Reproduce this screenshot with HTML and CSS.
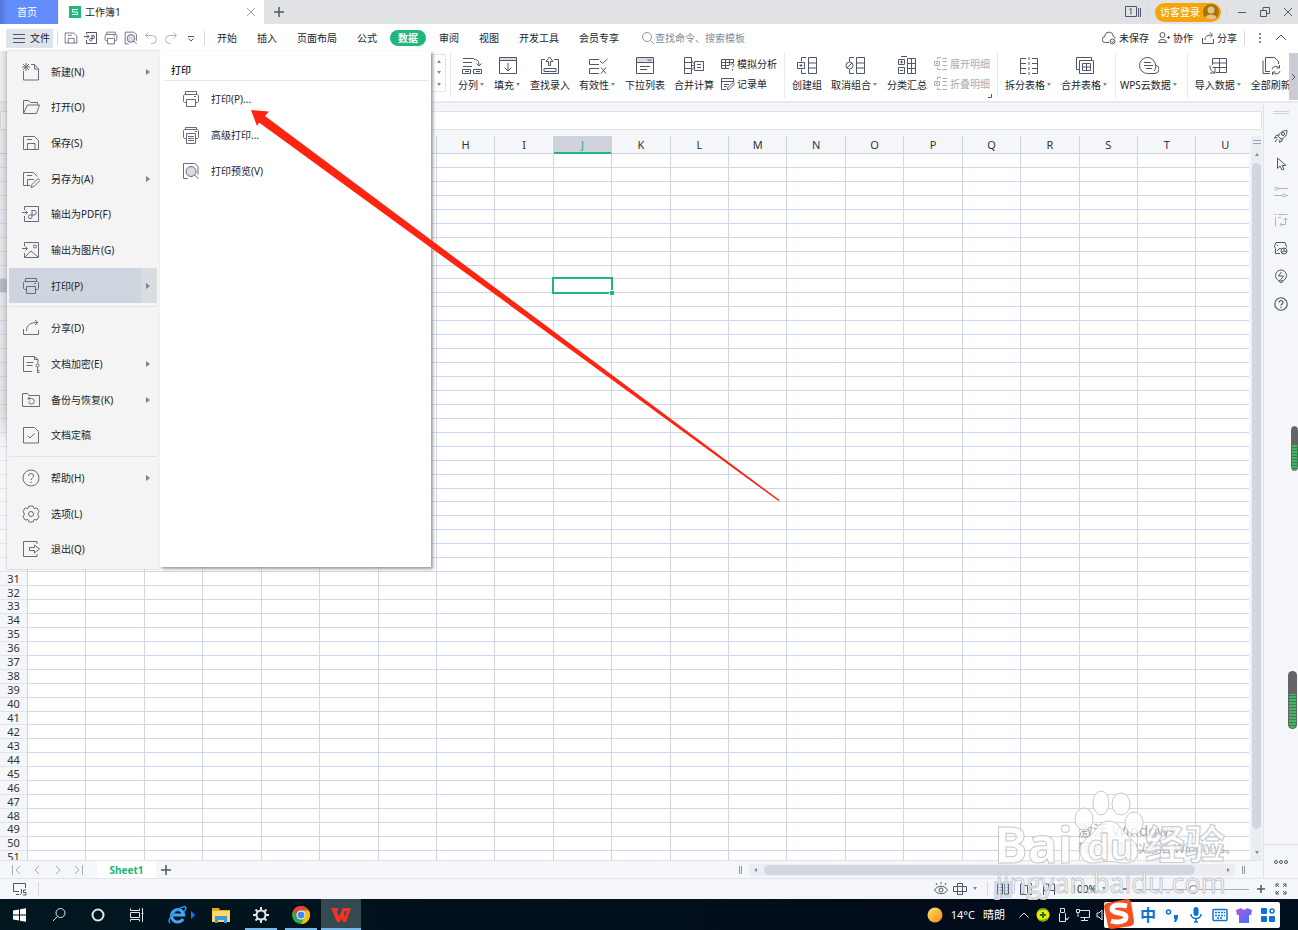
FILE: index.html
```html
<!DOCTYPE html>
<html lang="zh-CN">
<head>
<meta charset="utf-8">
<title>工作簿1</title>
<link rel="stylesheet" href="styles.css">
</head>
<body>
<svg class="defs" aria-hidden="true">
  <symbol id="new" viewBox="0 0 18 18"><path d="M1.500 8v9h15V6l-4-4.500H9M12.500 1.500V6h4M4 0v8M0 4h8M1 1l6 6M7 1L1 7"/></symbol>
  <symbol id="open" viewBox="0 0 18 18"><path d="M1.500 15.500v-13h5l2 2h7V7M1.500 15.500L5.500 7h12l-3 8.500z"/></symbol>
  <symbol id="save" viewBox="0 0 18 18"><path d="M1.500 15.500v-13h11l4 4v9zM5.500 15.500v-6h7.500v6M5 5.500h5"/></symbol>
  <symbol id="saveas" viewBox="0 0 18 18"><path d="M8 15.500H1.500v-13h10l4 4M5.500 15.500v-6H12M5 5.500h5M16 8.500l2 2-6 6-3 1 1-3z"/></symbol>
  <symbol id="pdf" viewBox="0 0 18 18"><path d="M2.500 5V1.500h14v15h-14V11M0 7.500h5M3.500 5.500l2 2-2 2M9.500 5.500h2.500a2.200 2.200 0 010 4.500H8.500a1.800 1.800 0 101.500 2v-6.500"/></symbol>
  <symbol id="pic" viewBox="0 0 18 18"><path d="M2.500 5V1.500h14v15h-14V12M0 7.500h5M3.500 5.500l2 2-2 2M3 16l6-6 7 6"/><circle cx="13" cy="5.500" r="1.500"/></symbol>
  <symbol id="print" viewBox="0 0 18 18"><path d="M3.500 4.500v-3h11v3M4 12.500H2.500l-1-1v-6l1-1h13l1 1v6l-1 1H14M4.500 9.500h9v7h-9zM12 6.500h2"/></symbol>
  <symbol id="printadv" viewBox="0 0 18 18"><path d="M3.500 3.500v-2h11v2M4 12.500H2.500l-1-1v-7l1-1h13l1 1v7l-1 1H14M4.500 7.500h9v10h-9zM6 10.500h6M6 12.500h6M6 14.500h6M13 5.500h2"/></symbol>
  <symbol id="preview" viewBox="0 0 18 18"><circle class="tint" cx="9" cy="9.500" r="5"/><path d="M6 16.500H1.500v-15h11l3.500 3v8M12.500 13l4 4"/><circle cx="9" cy="9.500" r="5"/></symbol>
  <symbol id="share" viewBox="0 0 18 18"><path d="M1.500 10v5.500h15V11M4.500 12c0-6 4-8.500 11-8.500M13 1l3 2.500-3 2.500"/></symbol>
  <symbol id="lock" viewBox="0 0 18 18"><path d="M10 16.500H1.500v-15h11l3.500 3v4M12.500 1.500v3H16M4.500 7.500h7M4.500 10.500h6M15.500 12v6M15.500 15.500h2M15.500 17.500h2"/><circle cx="15.500" cy="10.500" r="1.500"/></symbol>
  <symbol id="backup" viewBox="0 0 18 18"><path d="M.5 15.500v-13h5l1.500 2h10.500v11zM6 7.500h3.500a2.800 2.800 0 11-2.800 3M8 5.500l-2 2 2 2"/></symbol>
  <symbol id="final" viewBox="0 0 18 18"><path d="M1.500 1.500h11l4 4v11.500h-15zM5.500 9.500L8 12l4.500-4.500"/></symbol>
  <symbol id="help" viewBox="0 0 18 18"><circle cx="9" cy="9" r="8"/><path d="M6.500 7a2.500 2.500 0 115 0c0 2-2.500 2-2.500 4M9 12.500V14"/></symbol>
  <symbol id="gear" viewBox="0 0 18 18"><circle cx="9" cy="9" r="2.500"/><path d="M7 1h4l1 2.500 3-.5 2 3.500L15.500 9l1.500 2.500-2 3.500-3-.5-1 2.500H7l-1-2.500-3 .5-2-3.500L2.500 9 1 6.500 3 3l3 .5z"/></symbol>
  <symbol id="exit" viewBox="0 0 18 18"><path d="M15 4V1.500H1.500v15H15V14M7.500 7.500h5V5l5 4-5 4v-2.500h-5z"/></symbol>

  <symbol id="split" viewBox="0 0 20 20"><path d="M1 2.500h11M1 6.500h9M1 10.500h9M12 3.500c4 0 5 2 5 6M14.500 7.500l2.500 2.500 2.500-2.500M.5 13.500h8v4h-8zM11.500 13.500h8v4h-8zM3 15.500h4M14 15.500h4"/></symbol>
  <symbol id="fill" viewBox="0 0 20 20"><path class="tint" d="M1.500 1.500h17v3h-17z"/><path d="M1.500 1.500h17v16h-17zM1.500 4.500h17M10 7v8M6.500 11.500L10 15l3.500-3.500"/></symbol>
  <symbol id="lookup" viewBox="0 0 20 20"><path d="M5 3.500H1.500v14h17v-14H14M4 12.500h12v3H4zM8.500 9.500v-4H6L9.500 1 13 5.500h-2.500v4z"/></symbol>
  <symbol id="valid" viewBox="0 0 20 20"><path d="M11 3.500H1.500v5H11M11 12.500H1.500v5H11M12 5l2.500 2.500L19.500 3M13 11.500l5 6M18 11.500l-5 6"/></symbol>
  <symbol id="drop" viewBox="0 0 20 20"><path class="tint" d="M1.500 1.500h17v5h-17z"/><path d="M1.500 1.500h17v16h-17zM1.500 6.500h17M12.500 3l2 2 2-2M5 10.500h10M5 13.500h7"/></symbol>
  <symbol id="merge" viewBox="0 0 20 20"><path d="M.5 1.500h7v16h-7zM.5 6.500h7M.5 12.500h7M10.500 5.500h9v9h-9zM13 8.500h4M13 11.500h4M7.500 5l3 3M7.500 14l3-3M7.500 9.500h3"/></symbol>
  <symbol id="sim" viewBox="0 0 14 14"><path d="M8 11.500H.5v-9h12V6M.5 5.500h12M.5 8.500h8M4.500 2.500v9M8.500 2.500v6M10 8c0-2 3-1.500 3 0 0 1-1.500 1.500-1.500 2.500M11.500 12v1.500"/></symbol>
  <symbol id="record" viewBox="0 0 14 14"><path d="M5 12.500H.5v-11h12v3M.5 4.500h12M3 7.500h5M3 9.500h3M12 5.500l1.500 1.500L8 12.500H6.500v-1.500z"/></symbol>
  <symbol id="group" viewBox="0 0 20 20"><path d="M11.500 1.500h8v16h-8zM11.500 7h8M11.500 12h8M9 1.500H4.500v4M9 17.500H4.500v-4M.5 6.500h7v6h-7zM2.500 9.500h3M4 8v3"/></symbol>
  <symbol id="ungroup" viewBox="0 0 20 20"><path d="M11.500 1.500h8v16h-8zM11.500 7h8M11.500 12h8M9 1.500H4.500v4M9 17.500H4.500v-4M2 12l5-5"/><circle cx="4.500" cy="9.500" r="3.500"/></symbol>
  <symbol id="subtotal" viewBox="0 0 20 20"><path d="M10.500 2.500h8v15h-8zM14.500 2.500v15M10.500 7.500h8M10.500 12.500h8M1.500 3.500h6v5h-6zM1.500 11.500h6v6h-6zM3 6h3M4.500 4.500v3M3 14.500h3M4 .5h6"/></symbol>
  <symbol id="detail" viewBox="0 0 14 14"><path d="M7 .5H3.500v2M7 12.500H3.500v-2M.5 4.500h5v4h-5zM2 6.500h2M3 5.500v2M8.500 1.500H13M8.500 4.500H13M8.500 8.500H13M8.500 12.500H13"/></symbol>
  <symbol id="tsplit" viewBox="0 0 20 20"><path d="M7 2.500H1.500v15H7M1.500 7.500H7M1.500 12.500H7M13 2.500h5.500v15H13M13 7.500h5.500M13 12.500h5.500M10 1v3M10 6v3M10 11v3M10 16v3"/></symbol>
  <symbol id="tmerge" viewBox="0 0 20 20"><path d="M4 13.500H1.500v-12h15V4M4.500 4.500h14v13h-14zM7.500 7.500h8v7h-8zM7.500 11h8M11.500 7.500v7"/></symbol>
  <symbol id="cloud" viewBox="0 0 20 20"><path d="M16 17.500H8.500a8 8 0 118-8.500 4.300 4.300 0 01-.5 8.500zM5 6.500h7M5 9.500h9M7 12.500h6M16.500 9c.5 2.500 0 4.500-1.500 6"/></symbol>
  <symbol id="import" viewBox="0 0 20 20"><path d="M4.500 9V2.500h14v14H8M4.500 7h14M4.500 11.500h14M11.500 2.500v14M2 9.500c0 4 1 6 5 7M7 12v5H2"/></symbol>
  <symbol id="refresh" viewBox="0 0 20 20"><path d="M9 15.500H4.500v-14h9l4 4V8M2 4.500v13h7M11 13a4 4 0 017-1M18.500 9v3h-3M19 15a4 4 0 01-7 1.500M11.500 19v-3h3"/></symbol>

  <symbol id="expdf" viewBox="0 0 14 14"><path d="M2.500 3V1.500h10v11h-10V9M0 5.500h5M3 3.500l2 2-2 2M7.500 4.500H9a1.500 1.500 0 010 3H7a1.300 1.300 0 101 1.500V4.500"/></symbol>
  <symbol id="undo" viewBox="0 0 14 14"><path d="M4.500 1.500l-3 3 3 3M1.500 4.500h7a3.800 3.800 0 010 8H7"/></symbol>
  <symbol id="redo" viewBox="0 0 14 14"><path d="M9.500 1.500l3 3-3 3M12.500 4.500h-7a3.800 3.800 0 000 8H7"/></symbol>
  <symbol id="caret" viewBox="0 0 6 4"><path class="solid" d="M1 0h4L3 3z"/></symbol>
  <symbol id="x" viewBox="0 0 10 10"><path d="M1 1l8 8M9 1L1 9"/></symbol>
  <symbol id="plus" viewBox="0 0 10 10"><path d="M5 0v10M0 5h10"/></symbol>
</svg>

<header class="titlebar">
  <button class="home">首页</button>
  <div class="doc"><svg class="logo" viewBox="0 0 12 12"><path class="logo-bg" d="M0 0h12v12H0z"/><path class="logo-s" d="M9 3.500H3.500V6h5v2.500H3"/></svg><span>工作簿1</span><button class="tabclose" aria-label="关闭"><svg class="i10"><use href="#x"/></svg></button></div>
  <button class="plus" aria-label="新建标签"><svg class="i10"><use href="#plus"/></svg></button>
  <div class="winctl">
    <svg class="i18" viewBox="0 0 18 18"><path d="M1.500 3.500h11v10h-11zM14.500 5v9M16.500 5v9M5.500 6.500l1.500-1v6"/></svg>
    <i class="vr"></i>
    <button class="login">访客登录<svg class="i16" viewBox="0 0 16 16"><circle class="av-bg" cx="8" cy="8" r="8"/><circle class="av-fg" cx="8" cy="6" r="3.500"/><path class="av-fg" d="M2.500 13.500c1-4 10-4 11 0-3 3-8 3-11 0z"/></svg></button>
    <i class="vr"></i>
    <button aria-label="最小化"><svg class="i10" viewBox="0 0 10 10"><path d="M1 5.500h8"/></svg></button>
    <button aria-label="还原"><svg class="i10" viewBox="0 0 10 10"><path d="M.5 3.500h6v6h-6zM3 3.500V.5h6.500v6H7"/></svg></button>
    <button aria-label="关闭窗口"><svg class="i10"><use href="#x"/></svg></button>
  </div>
</header>

<nav class="menubar">
  <button class="file"><svg class="i12" viewBox="0 0 12 12"><path d="M0 2.500h12M0 6.500h12M0 10.500h12"/></svg>文件</button>
  <i class="vr"></i>
  <div class="quick">
    <button aria-label="保存"><svg><use href="#save"/></svg></button>
    <button aria-label="输出为PDF"><svg><use href="#expdf"/></svg></button>
    <button aria-label="打印"><svg><use href="#print"/></svg></button>
    <button aria-label="打印预览"><svg><use href="#preview"/></svg></button>
    <button aria-label="撤销" class="dim"><svg><use href="#undo"/></svg></button>
    <button aria-label="恢复" class="dim"><svg><use href="#redo"/></svg></button>
    <button aria-label="更多"><svg viewBox="0 0 14 14"><path d="M4 5.500h6M4.500 7.500L7 10l2.500-2.500"/></svg></button>
  </div>
  <i class="vr"></i>
  <div class="tabs">
    <button>开始</button><button>插入</button><button>页面布局</button><button>公式</button><button class="on">数据</button><button>审阅</button><button>视图</button><button>开发工具</button><button>会员专享</button>
  </div>
  <label class="search"><svg class="i12" viewBox="0 0 12 12"><circle cx="5" cy="5" r="4.500"/><path d="M8.500 8.500L12 12"/></svg><input type="text" aria-label="查找命令" placeholder="查找命令、搜索模板"></label>
  <div class="cowork">
    <button><svg class="i14" viewBox="0 0 14 14"><path d="M7 11.500H3.500a3 3 0 01-.5-6 4 4 0 018-.5 3 3 0 012 2.500"/><circle cx="10.500" cy="10.500" r="2.500"/><path d="M9.500 10.500l1 1 1.500-2"/></svg>未保存</button>
    <button><svg class="i12" viewBox="0 0 12 12"><circle cx="4.500" cy="3" r="2.500"/><path d="M.5 10.500c0-4 8-4 8 0zM9 5.500h3M10.500 4v3"/></svg>协作</button>
    <button><svg class="i12" viewBox="0 0 12 12"><path d="M.5 6v5.500h11V7M3 8c0-4 3-5 7-5M8 .5L10.500 3 8 5.500"/></svg>分享</button>
    <i class="vr"></i>
    <button aria-label="选项"><svg class="i12" viewBox="0 0 12 12"><path class="solid" d="M5 1h2v2H5zM5 5h2v2H5zM5 9h2v2H5z"/></svg></button>
    <button aria-label="收起"><svg class="i12" viewBox="0 0 12 12"><path d="M1 8l5-5 5 5"/></svg></button>
  </div>
</nav>

<section class="ribbon" aria-label="数据">
  <div class="spin"><svg><use href="#caret"/></svg><svg><use href="#caret"/></svg><svg><use href="#caret"/></svg></div>
  <div class="group">
    <button><svg><use href="#split"/></svg><span>分列<svg class="car"><use href="#caret"/></svg></span></button>
    <button><svg><use href="#fill"/></svg><span>填充<svg class="car"><use href="#caret"/></svg></span></button>
    <button><svg><use href="#lookup"/></svg><span>查找录入</span></button>
    <button><svg><use href="#valid"/></svg><span>有效性<svg class="car"><use href="#caret"/></svg></span></button>
    <button><svg><use href="#drop"/></svg><span>下拉列表</span></button>
    <button><svg><use href="#merge"/></svg><span>合并计算</span></button>
    <div class="pair"><button><svg><use href="#sim"/></svg>模拟分析</button><button><svg><use href="#record"/></svg>记录单</button></div>
  </div>
  <div class="group">
    <button><svg><use href="#group"/></svg><span>创建组</span></button>
    <button><svg><use href="#ungroup"/></svg><span>取消组合<svg class="car"><use href="#caret"/></svg></span></button>
    <button><svg><use href="#subtotal"/></svg><span>分类汇总</span></button>
    <div class="pair"><button disabled><svg><use href="#detail"/></svg>展开明细</button><button disabled><svg><use href="#detail"/></svg>折叠明细</button></div>
    <svg class="launch" viewBox="0 0 4 4"><path d="M3.500 0v3.500H0"/></svg>
  </div>
  <div class="group">
    <button><svg><use href="#tsplit"/></svg><span>拆分表格<svg class="car"><use href="#caret"/></svg></span></button>
    <button><svg><use href="#tmerge"/></svg><span>合并表格<svg class="car"><use href="#caret"/></svg></span></button>
  </div>
  <div class="group cloudgroup">
    <button><svg><use href="#cloud"/></svg><span>WPS云数据<svg class="car"><use href="#caret"/></svg></span></button>
  </div>
  <div class="group last">
    <button><svg><use href="#import"/></svg><span>导入数据<svg class="car"><use href="#caret"/></svg></span></button>
    <button><svg><use href="#refresh"/></svg><span>全部刷新</span></button>
  </div>
  <button class="more" aria-label="更多命令"><svg viewBox="0 0 6 10"><path d="M1 2l3 3-3 3"/></svg></button>
</section>

<main class="work">
  <div class="book">
    <div class="formula"><input type="text" aria-label="编辑栏"></div>
    <div class="sheetrow">
      <div class="sheet"><table id="grid"></table></div>
      <div class="vscroll"><span class="splitter"></span><svg><use href="#caret"/></svg><span class="thumb"></span><svg><use href="#caret"/></svg></div>
    </div>
    <div class="sheetbar">
      <div class="nav">
        <button aria-label="第一个"><svg class="i10" viewBox="0 0 10 10"><path d="M1.500 0v10M9 1L5 5l4 4"/></svg></button>
        <button aria-label="上一个"><svg class="i10" viewBox="0 0 10 10"><path d="M7 1L3 5l4 4"/></svg></button>
        <button aria-label="下一个"><svg class="i10" viewBox="0 0 10 10"><path d="M3 1l4 4-4 4"/></svg></button>
        <button aria-label="最后一个"><svg class="i10" viewBox="0 0 10 10"><path d="M8.500 0v10M1 1l4 4-4 4"/></svg></button>
      </div>
      <button class="sheettab">Sheet1</button>
      <button class="addsheet" aria-label="新建工作表"><svg class="i10"><use href="#plus"/></svg></button>
      <div class="hscroll"><i class="grip"></i><div class="track"><svg><use href="#caret"/></svg><span class="thumb"></span><svg><use href="#caret"/></svg></div><i class="grip"></i></div>
    </div>
  </div>
  <aside class="side">
    <i class="grip"></i>
    <button aria-label="快捷"><svg viewBox="0 0 14 14"><path d="M4.500 7.500c1-4 4-6 8.500-6 0 4.500-2 7.500-6 8.500zM5 6L2 6.500.5 9l3-.5M8.500 9.500L8 12l-2.500 1.500.5-3M3.500 10L1 13"/><circle cx="9" cy="5" r="1.500"/></svg></button>
    <button aria-label="选择"><svg viewBox="0 0 14 14"><path d="M3.500 1v10.500L6 9l2 4 2-1-2-3.500h4z"/></svg></button>
    <button aria-label="属性" class="dim"><svg viewBox="0 0 14 14"><path d="M4 3.500h10M0 10.500h8M12 10.500h2"/><circle cx="2.500" cy="3.500" r="1.500"/><circle cx="10" cy="10.500" r="1.500"/></svg></button>
    <button aria-label="分析" class="dim"><svg viewBox="0 0 14 14"><path d="M1.500 4.500v9M4.500 1.500h9M.5 1.500h2M4.500 4.500H7M11.500 5v6.500H6M9.500 7l2-2 2 2M8 9.500l-2 2 2 2"/></svg></button>
    <button aria-label="风格"><svg viewBox="0 0 14 14"><path d="M6 12.500H1.500v-5l-1-2 1.500-4h9l1.500 4v1M3 4.500h1M3 10l3-3 2 2"/><circle cx="10" cy="10" r="3"/><path d="M10 10V7M10 10l3 1M10 10l-3 2"/></svg></button>
    <button aria-label="工具"><svg viewBox="0 0 14 14"><circle cx="7" cy="6.500" r="5.500"/><path d="M7.500 3l-3 4h5l-3 4M4.500 12L7 14l2.500-2"/></svg></button>
    <button aria-label="帮助"><svg class="ask"><use href="#help"/></svg></button>
    <button class="dots" aria-label="更多"><svg viewBox="0 0 14 14"><circle cx="2" cy="7" r="1.500"/><circle cx="7" cy="7" r="1.500"/><circle cx="12" cy="7" r="1.500"/></svg></button>
    <span class="meter m1"></span><span class="meter m2"></span>
  </aside>
</main>

<footer class="status">
  <svg class="i14" viewBox="0 0 14 14"><path d="M6 9.500H.5v-8h12V6M3 12.500h3M8.500 7v4.500L7 13M13 8h-2.500v2.500H13V13h-3"/></svg>
  <i class="vr"></i>
  <div class="view">
    <svg class="i14" viewBox="0 0 14 14"><path d="M.5 8c3-5 10-5 13 0-3 5-10 5-13 0zM2 1l1 2M7 0v2M12 1l-1 2"/><circle cx="7" cy="8" r="2"/></svg>
    <svg class="i14" viewBox="0 0 14 14"><path d="M4.500 1.500h5v11h-5zM.5 4.500h13v5H.5z"/></svg>
    <svg class="car"><use href="#caret"/></svg>
    <i class="vr"></i>
    <button class="on" aria-label="普通视图"><svg class="i12" viewBox="0 0 12 12"><path d="M.5 1h5v10h-5zM.5 4.500h5M.5 7.500h5M7.500 1h4v10h-4zM7.500 4.500h4M7.500 7.500h4"/></svg></button>
    <button aria-label="分页预览"><svg class="i12" viewBox="0 0 12 12"><path d="M3 11.500H.5V1H3M3.500 2.500h4v9h-4zM8 .5h3.500v11H8"/></svg></button>
    <button aria-label="页面布局"><svg class="i12" viewBox="0 0 12 12"><path d="M.5 12V1h5v6.500h-5M7.500 1h4v11M7.500 1v6.500h4"/></svg></button>
    <button class="pct">100%<svg class="car"><use href="#caret"/></svg></button>
    <button class="zb" aria-label="缩小"><svg class="i10" viewBox="0 0 10 10"><path d="M2 5h6"/></svg></button>
    <input type="range" min="0" max="100" value="50" aria-label="缩放">
    <button class="zb" aria-label="放大"><svg class="i10" viewBox="0 0 10 10"><path d="M5 1v8M1 5h8"/></svg></button>
    <svg class="i12 full" viewBox="0 0 12 12"><path d="M1 4V1h3M8 1h3v3M11 8v3H8M4 11H1V8M1 1l3 3M11 1L8 4M11 11L8 8M1 11l3-3"/></svg>
  </div>
</footer>

<div class="taskbar">
  <div class="apps">
    <button aria-label="开始菜单"><svg viewBox="0 0 16 16"><path class="white" d="M1 3.500l6-1v5H1zM8 2.300l6-1v6.200H8zM1 8.500h6v5l-6-1zM8 8.500h6v6.200l-6-1z"/></svg></button>
    <button aria-label="搜索"><svg viewBox="0 0 16 16"><circle cx="9.500" cy="6" r="4.500"/><path d="M6.500 9.500L2 14"/></svg></button>
    <button aria-label="Cortana"><svg viewBox="0 0 16 16"><circle class="thick" cx="8" cy="8" r="5.500"/></svg></button>
    <button aria-label="任务视图"><svg viewBox="0 0 16 16"><path d="M1.500 5.500h9v5h-9zM1.500 1.500v2h9v-2M1.500 14.500v-2h9v2M13.500 1v14M12.500 6.500h2"/></svg></button>
    <button class="ie" aria-label="Internet Explorer"><svg class="big" viewBox="0 0 20 20"><path class="iee" d="M16 14a6.200 6.200 0 11.800-4H5"/><path class="ier" d="M3 18C-1 15 9 3 18 1.500c2 1 0 4-1 5"/></svg><svg class="tri" viewBox="0 0 4 8"><path d="M0 0l4 4-4 4z"/></svg></button>
    <button aria-label="文件资源管理器"><svg class="big" viewBox="0 0 20 20"><path fill="#e8a81c" stroke="none" d="M1 3h7l1 2h10v12H1z"/><path fill="#ffd766" stroke="none" d="M1 6h18v11H1z"/><path fill="#3a9be0" stroke="none" d="M4 11h12v7h-3v-3H7v3H4z"/></svg></button>
    <button class="run" aria-label="设置"><svg viewBox="0 0 16 16"><circle class="thick" cx="8" cy="8" r="4.500"/><path class="thick" d="M8 0v3M8 13v3M0 8h3M13 8h3M2.500 2.500l2 2M11.500 11.500l2 2M13.500 2.500l-2 2M4.500 11.500l-2 2"/></svg></button>
    <button class="run" aria-label="Chrome"><svg class="big" viewBox="0 0 20 20"><g stroke="none"><circle cx="10" cy="10" r="9" fill="#34a853"/><path fill="#ea4335" d="M2.200 5.500a9 9 0 0115.600 0H10a4.500 4.500 0 00-4 6.500z"/><path fill="#fbbc05" d="M17.800 5.500A9 9 0 0110 19l4-7a4.500 4.500 0 00-4-6.500z"/><circle cx="10" cy="10" r="4.500" fill="#fff"/><circle cx="10" cy="10" r="3.500" fill="#4285f4"/></g></svg></button>
    <button class="run active" aria-label="WPS"><svg class="big" viewBox="0 0 20 20"><path fill="#f53322" stroke="none" d="M0 3h7v3H5.500L8 12l3.500-9H15l-2 6 1 3 2-6h-2l1-3h5l-5 14h-3l-1.500-4L9 17H6z"/></svg></button>
  </div>
  <div class="tray">
    <svg viewBox="0 0 16 16"><defs><linearGradient id="sun" x2="1" y2="1"><stop stop-color="#ffe27a"/><stop offset="1" stop-color="#f58a00"/></linearGradient></defs><circle cx="8" cy="8" r="7.500" fill="url(#sun)" stroke="none"/></svg>
    <span class="weather"><span>14°C</span><span>晴朗</span></span>
    <svg class="i12" viewBox="0 0 12 12"><path d="M1.500 8.500L6 4l4.500 4.500"/></svg>
    <svg class="i14" viewBox="0 0 14 14"><g stroke="none"><circle cx="7" cy="7" r="6.500" fill="#ffe100"/><path fill="#54b72a" d="M1 4a6.500 6.500 0 0112 0c-4-3-8-2-12 0zM1 10c4 3 8 2 12-1a6.500 6.500 0 01-12 1z"/></g><path stroke="#137a28" stroke-width="2" d="M7 4v6M4 7h6"/></svg>
    <svg class="i14" viewBox="0 0 14 14"><path d="M4.500 4V.5h4V4M3.500 13.500v-8l1-1h4l1 1v8zM10 10l1 2 2-3"/></svg>
    <svg class="i14" viewBox="0 0 14 14"><path d="M4 2.500h9.500v7H4.500M8.500 10v2.500M5 12.500h7M.5 1.500h3v3h-3zM2 4.500V9"/></svg>
    <svg class="i14" viewBox="0 0 14 14"><path d="M1 5v4h2l3 3V2L3 5zM8 5c1 1 1 3 0 4M10 3c2 2 2 6 0 8M12 1.500c3 3 3 8 0 11"/></svg>
    <div class="ime">
      <svg class="sogou" viewBox="0 0 30 30"><path fill="#f4511e" stroke="none" d="M3 4l20-4q3 0 4 3l3 19q0 4-3 5L8 30q-4 0-4-3L0 8q0-3 3-4z"/><path class="sg" d="M23 7C15 5 8 6 8 10c0 5 14 3 14 8 0 5-9 6-15 4"/></svg>
      <button class="zh">中</button>
      <svg viewBox="0 0 16 16"><circle cx="4.500" cy="5" r="2"/><path class="blue" d="M10 8h4v3l-2 4h-2l1-3h-1z"/></svg>
      <svg viewBox="0 0 16 16"><rect class="blue" x="5.500" y="0" width="5" height="9" rx="2.500"/><path d="M3 7c0 6 10 6 10 0M8 12v3M6 15h4"/></svg>
      <svg viewBox="0 0 16 16"><rect x="1" y="2.500" width="14" height="11" rx="1"/><path d="M3 5.500h10M3 8.500h10M5 11h6" stroke-dasharray="2 1"/></svg>
      <svg viewBox="0 0 16 16"><defs><linearGradient id="sh" x2="1" y2="1"><stop stop-color="#b457dc"/><stop offset="1" stop-color="#3975ff"/></linearGradient></defs><path fill="url(#sh)" stroke="none" d="M5 1c1 2 5 2 6 0l5 2-1 5h-2v8H3V8H1L0 3z"/></svg>
      <svg viewBox="0 0 16 16"><g class="blue"><rect x="1" y="1" width="6" height="6" rx="1"/><rect x="1" y="9" width="6" height="6" rx="1"/><rect x="9" y="9" width="6" height="6" rx="1"/></g><rect x="10" y="2" width="4" height="4" rx="2"/></svg>
    </div>
  </div>
</div>

<div class="filemenu">
  <i class="edge"></i>
  <div class="primary" role="menu">
    <button><svg><use href="#new"/></svg>新建(N)<i></i></button>
    <button><svg><use href="#open"/></svg>打开(O)</button>
    <button><svg><use href="#save"/></svg>保存(S)</button>
    <button><svg><use href="#saveas"/></svg>另存为(A)<i></i></button>
    <button><svg><use href="#pdf"/></svg>输出为PDF(F)</button>
    <button><svg><use href="#pic"/></svg>输出为图片(G)</button>
    <button class="on"><svg><use href="#print"/></svg>打印(P)<i></i></button>
    <hr>
    <button><svg><use href="#share"/></svg>分享(D)</button>
    <button><svg><use href="#lock"/></svg>文档加密(E)<i></i></button>
    <button><svg><use href="#backup"/></svg>备份与恢复(K)<i></i></button>
    <button><svg><use href="#final"/></svg>文档定稿</button>
    <hr>
    <button><svg><use href="#help"/></svg>帮助(H)<i></i></button>
    <button><svg><use href="#gear"/></svg>选项(L)</button>
    <button><svg><use href="#exit"/></svg>退出(Q)</button>
  </div>
  <div class="secondary" role="menu">
    <h2>打印</h2>
    <button><svg><use href="#print"/></svg>打印(P)...</button>
    <button><svg><use href="#printadv"/></svg>高级打印...</button>
    <button><svg><use href="#preview"/></svg>打印预览(V)</button>
  </div>
</div>

<svg class="arrow" viewBox="0 0 530 392"><path d="M0 0L18 1.500 14 6 528.500 390 527.500 391 8 12.500 6 16z"/></svg>

<svg class="mark" viewBox="0 0 250 120">
  <g class="activate"><text x="88" y="56" font-size="15">激活 Windows</text><text x="88" y="73" font-size="12">转到“设置”以激活 Windows。</text></g>
  <g class="paw"><ellipse cx="111" cy="23" rx="8" ry="12"/><ellipse cx="131" cy="24" rx="9" ry="11"/><ellipse cx="94" cy="39" rx="9" ry="11"/><ellipse cx="144" cy="43" rx="9" ry="11"/><path d="M119 41c-9 0-12 8-18 14-6 5-12 9-11 17 1 8 8 12 15 11 9-2 18-2 27 0 9 1 15-3 16-11 0-8-6-12-11-17-6-6-9-14-18-14z"/></g>
  <g class="brand"><text x="4" y="83" font-size="50">Bai</text><text x="97" y="80" font-size="36">du</text><text x="155" y="79" font-size="40">经验</text></g>
  <text class="url" x="6" y="113" font-size="27">jingyan.baidu.com</text>
</svg>
<script src="grid.js"></script>
</body>
</html>
```

FILE: styles.css
```css
* { box-sizing: border-box; }
body {
  margin: 0; height: 100vh; display: flex; flex-direction: column; overflow: hidden; position: relative;
  font: 10px/14px "Noto Sans", "Noto Sans CJK SC", sans-serif; color: #20242e; background: #f5f6f9;
}
button { font: inherit; color: inherit; background: none; border: 0; padding: 0; margin: 0; white-space: nowrap; }
input { font: inherit; color: inherit; }
svg { fill: none; stroke: #4e566a; stroke-width: 1; flex: none; display: block; }
.defs { position: absolute; width: 0; height: 0; }
.solid { fill: #7d88a0; stroke: none; }
.tint { fill: #d9dce3; stroke: none; }
.i10 { width: 10px; height: 10px; }
.i12 { width: 12px; height: 12px; }
.i14 { width: 14px; height: 14px; }
.i16 { width: 16px; height: 16px; }
.i18 { width: 18px; height: 18px; }
.car { width: 6px; height: 4px; }
.vr { width: 1px; height: 14px; background: #d5d8de; flex: none; }

.titlebar { height: 24px; flex: none; display: flex; align-items: stretch; background: #e1e2e6; }
.home { width: 59px; padding-right: 4px; background: linear-gradient(90deg, #5276d8, #618cfa 8px); color: #fff; border-right: 1px solid #f0f2f8; }
.doc { width: 205px; display: flex; align-items: center; gap: 4px; padding: 0 8px 0 10px; background: #fff; }
.logo { width: 12px; height: 12px; }
.logo-bg { fill: #1eb978; stroke: none; }
.logo-s { stroke: #fff; }
.tabclose { margin-left: auto; }
.tabclose svg { stroke: #9aa4b8; }
.plus { width: 29px; display: grid; place-items: center; }
.plus svg, .addsheet svg { stroke-width: 1.500; }
.winctl { margin-left: auto; display: flex; align-items: center; gap: 6px; padding-right: 5px; }
.winctl > button:not(.login) { margin-left: 4px; margin-right: 3px; }
.winctl > button:last-child:not(.login) { margin-right: 0; }
.login { display: flex; align-items: center; gap: 3px; height: 19px; margin-right: -1px; padding: 0 2px 0 5px; border-radius: 10px; background: #f5a50c; color: #fff; }
.av-bg { fill: #a8720e; stroke: none; }
.av-fg { fill: #e2c48a; stroke: none; }

.menubar { height: 28px; flex: none; display: flex; align-items: center; padding: 0 11px 0 6px; background: #fff; }
.file { display: flex; align-items: center; gap: 5px; height: 19px; width: 47px; padding-left: 7px; background: #dfe4ea; }
.menubar > .vr { margin: 0 4px; }
.quick { display: flex; gap: 6px; padding: 0 2px; }
.quick svg { width: 14px; height: 14px; }
.dim svg { stroke: #aeb4c0; }
.tabs { display: flex; gap: 4px; }
.tabs button { padding: 0 8px; height: 16px; line-height: 16px; border-radius: 8px; }
.tabs .on { margin: 0 1px; background: #22b57c; color: #fff; font-weight: 700; }
.search { display: flex; align-items: center; gap: 1px; margin-left: 15px; }
.search svg { stroke: #8b95aa; }
.search input { width: 110px; border: 0; padding: 0; background: none; outline: 0; }
.search input::placeholder { color: #8089a0; opacity: 1; }
.cowork { margin-left: auto; display: flex; align-items: center; gap: 9px; }
.cowork button { display: flex; align-items: center; gap: 3px; }
.cowork .vr { margin-left: -2px; }

.ribbon { height: 51px; flex: none; display: flex; background: #fff; border-bottom: 2px solid #e8eaed; padding-left: 431px; overflow: hidden; position: relative; }
.spin { width: 15px; height: 38px; margin: 2px 4px 0 0; flex: none; border: 1px solid #e2e4e9; display: flex; flex-direction: column; align-items: center; justify-content: space-around; }
.spin svg { width: 6px; height: 4px; }
.spin svg:first-child, .vscroll svg:first-of-type { transform: rotate(180deg); }
.group { display: flex; gap: 9px; padding: 4px 7px 0; border-left: 1px solid #e9ebef; flex: none; position: relative; margin-bottom: 3px; }
.group > button { display: flex; flex-direction: column; align-items: center; gap: 2px; height: 40px; }
.group > button > svg { width: 20px; height: 20px; }
.group > button span { display: flex; align-items: center; gap: 1px; }
.pair { display: flex; flex-direction: column; gap: 6px; padding-top: 1px; margin-left: -2px; }
.pair button { display: flex; align-items: center; gap: 2px; height: 14px; }
.pair svg { width: 14px; height: 14px; }
.pair button:disabled { color: #a9adb5; }
.pair button:disabled svg { stroke: #a9adb5; }
.launch { width: 4px; height: 4px; position: absolute; right: 5px; bottom: 0; }
.cloudgroup { padding-left: 4px; padding-right: 9px; }
.more { position: absolute; right: 0; top: 1px; bottom: 1px; width: 9px; background: #c9ccd4; display: grid; place-items: center; }
.more svg { width: 6px; height: 10px; }

.work { flex: 1; min-height: 0; display: flex; }
.book { flex: 1; min-width: 0; display: flex; flex-direction: column; }
.formula { padding: 8px 1px 6px 0; flex: none; display: flex; }
.formula input { flex: 1; height: 19px; border: 1px solid #e0e2e6; background: #fff; padding: 0 6px; }
.sheetrow { flex: 1; min-height: 0; display: flex; }
.sheet { flex: 1; min-width: 0; overflow: hidden; background: #fff; }
.sheet table { width: calc(100% + 6px); height: calc(100% + 5px); table-layout: fixed; border-collapse: separate; border-spacing: 0; font-size: 11px; line-height: 12px; color: #333; }
.sheet th { font-weight: 400; padding: 0; background: #f5f6f9; border-right: 1px solid #ccd3e3; border-bottom: 1px solid #ccd3e3; text-align: center; }
.sheet thead th { height: 18px; }
.sheet th:first-child { width: 28px; }
.sheet tbody th { border-bottom-color: #dfe3ed; }
.sheet td { padding: 0; border-right: 1px solid #d0d6e5; border-bottom: 1px solid #d0d6e5; }
.sheet thead th.cur { background: linear-gradient(#22b57c, #22b57c) bottom / 100% 1px no-repeat #d0d3dc; color: #22b57c; border-bottom-color: #22b57c; }
.sheet tbody th.cur { background: #c3c6ce; }
.sheet td.sel { position: relative; }
.sel span { position: absolute; inset: -2px; border: 2px solid #22b57c; }
.sel span::after { content: ""; position: absolute; right: -3px; bottom: -3px; width: 4px; height: 4px; background: #22b57c; border: 1px solid #fff; border-width: 1px 0 0 1px; }
.vscroll { width: 14px; flex: none; display: flex; flex-direction: column; align-items: center; background: #ebedf3; border-left: 2px solid #f5f6f9; border-right: 1px solid #f5f6f9; }
.vscroll svg { width: 6px; height: 4px; margin: 5px 0; }
.splitter { width: 8px; height: 4px; border: 1px solid #9aa3b5; border-width: 1px 0; margin: 4px 0 3px; }
.thumb { background: #d3d6df; border-radius: 5px; flex: 1; }
.vscroll .thumb { width: 9px; margin: 2px 0 17px; }
.sheetbar { height: 18px; flex: none; display: flex; align-items: stretch; border-top: 1px solid #e1e4ea; }
.nav { display: flex; gap: 11px; align-items: center; padding: 0 13px 0 11px; }
.nav svg { stroke: #a4abb9; }
.sheettab { width: 59px; background: #fff; color: #22b57c; font-weight: 700; }
.addsheet { width: 20px; display: grid; place-items: center; }
.hscroll { margin-left: auto; width: 41.5%; display: flex; align-items: center; gap: 7px; padding-right: 18px; }
.grip { flex: none; }
.hscroll .grip { width: 3px; height: 8px; border: 1px solid #8d96a8; border-width: 0 1px; }
.track { flex: 1; height: 12px; background: #ebedf3; display: flex; align-items: center; }
.track svg { width: 6px; height: 4px; margin: 0 3px; transform: rotate(90deg); }
.track svg:last-child { transform: rotate(-90deg); }
.track .thumb { height: 10px; margin: 0 28px 0 3px; }

.side { width: 35px; flex: none; display: flex; flex-direction: column; align-items: center; border-left: 1px solid #dfe2ea; position: relative; }
.side > .grip { width: 16px; height: 3px; border: 1px solid #cfd3db; border-width: 1px 0; margin: 8px 0; }
.side button { height: 28px; width: 100%; display: grid; place-items: center; }
.side svg { width: 14px; height: 14px; }
.side .ask { stroke-width: 1.500; }
.side .dots { margin-top: auto; height: 34px; border-top: 1px solid #dfe2ea; }
.meter { position: absolute; right: 0; width: 7px; border-radius: 4px; border: 1px solid #626466; background: linear-gradient(#626466 40%, transparent 40%), repeating-linear-gradient(#35bf5b 0 2px, #626466 2px 3px); }
.m1 { top: 323px; height: 45px; }
.m2 { top: 568px; height: 58px; width: 9px; right: 1px; }

.status { height: 21px; flex: none; display: flex; align-items: center; gap: 11px; padding: 0 11px 0 13px; border-top: 1px solid #e1e4ea; }
.view { margin-left: auto; display: flex; align-items: center; gap: 5px; }
.view .vr { margin: 0 1px 0 4px; }
.view button { height: 17px; width: 18px; display: grid; place-items: center; flex: none; }
.view .on { background: #d8dde5; }
.view .pct { width: 52px; display: flex; align-items: center; justify-content: center; gap: 4px; }
.view .zb { width: 10px; }
.zb svg { stroke-width: 1.500; }
.view input { -webkit-appearance: none; appearance: none; width: 112px; height: 12px; margin: 0 2px; background: linear-gradient(#a5adbb, #a5adbb) center / 100% 1px no-repeat; }
.view input::-webkit-slider-thumb { -webkit-appearance: none; width: 9px; height: 9px; border-radius: 5px; background: #fff; border: 1px solid #697186; }
.full { margin-left: 4px; }

.taskbar { height: 31px; flex: none; display: flex; justify-content: space-between; background: linear-gradient(90deg, #02171f, #020c1b 70%, #03101f); color: #fff; }
.taskbar svg { width: 16px; height: 16px; stroke: #dfe5e8; }
.apps { display: flex; }
.apps button { width: 39px; display: flex; align-items: center; justify-content: center; }
.apps button:nth-child(n+6) { width: 40px; }
.apps .ie { width: 45px; padding-left: 5px; gap: 4px; }
.taskbar .big { width: 20px; height: 20px; }
.taskbar .tri { width: 4px; height: 8px; fill: #0a78ff; stroke: none; }
.white { fill: #fff; stroke: none; }
.thick { stroke-width: 2; }
.iee { stroke: #46a6f0; stroke-width: 3; }
.ier { stroke: #2d8fe5; stroke-width: 1.500; }
.run { background: linear-gradient(#76b9ed, #76b9ed) center bottom / 32px 2px no-repeat; }
.run.active { background: linear-gradient(#76b9ed, #76b9ed) center bottom / 40px 2px no-repeat, #344a50; }
.tray { display: flex; align-items: center; gap: 6px; padding-right: 18px; }
.weather { display: flex; gap: 8px; font-size: 11px; margin: 0 7px 0 2px; }
.tray > .i12 { width: 12px; height: 12px; }
.tray > .i14 { width: 14px; height: 14px; }
.ime { width: 176px; height: 26px; margin-left: -12px; padding: 0 4px 0 36px; background: #fff; display: flex; align-items: center; justify-content: space-between; position: relative; border-radius: 2px; }
.ime svg { stroke: #0b72d9; stroke-width: 1.500; }
.blue { fill: #0b72d9; stroke: none; }
.ime .sogou { width: 30px; height: 30px; position: absolute; left: 0; top: -3px; }
.sg { stroke: #fff; stroke-width: 5; }
.zh { font-size: 16px; line-height: 20px; font-weight: 700; color: #0b72d9; }

.filemenu { position: absolute; left: 0; top: 51px; display: flex; align-items: flex-start; }
.edge { width: 7px; height: 400px; background: linear-gradient(90deg, rgba(60, 60, 70, .08), rgba(60, 60, 70, .22)); mask-image: linear-gradient(#000 90%, transparent); }
.primary { width: 153px; height: 518px; padding: 3px 3px 2px 2px; display: flex; flex-direction: column; background: #f4f4f4; box-shadow: 0 0 2px #a9a9a9; position: relative; }
.primary button { flex: 1; display: flex; align-items: center; gap: 11px; padding: 0 7px 0 13px; position: relative; }
.primary svg, .secondary svg { width: 18px; height: 18px; stroke: #666c7a; }
.primary i { margin-left: auto; border: 3px solid transparent; border-left: 4px solid #76829b; border-right: 0; }
.primary .on { background: linear-gradient(90deg, #cfd5de 132px, #d9dde2 132px); }
.primary hr { width: 100%; height: 1px; margin: 3px 0; border: 0; background: #e0e2e6; }
.secondary { width: 271px; height: 516px; background: #fff; box-shadow: 2px 2px 3px #999; position: relative; }
.secondary h2 { margin: 0 2px 0 4px; padding: 12px 0 3px 7px; font-size: 10px; line-height: 14px; font-weight: 500; border-bottom: 1px solid #e6e8eb; }
.secondary button { display: flex; width: 100%; height: 36px; align-items: center; gap: 11px; padding-left: 22px; }

.arrow { position: absolute; left: 251px; top: 110px; width: 530px; height: 392px; fill: #ff2412; stroke: none; pointer-events: none; }
.mark { position: absolute; right: 58px; bottom: 30px; width: 250px; height: 120px; pointer-events: none; }
.activate { fill: #a4a6aa; stroke: none; }
.paw, .brand, .url { fill: #fff; fill-opacity: .8; stroke: #c6c8cc; stroke-width: 1; }
.brand { font-family: "Open Sans", "Noto Sans CJK SC", sans-serif; font-weight: 700; }
.url { font-family: "Open Sans", sans-serif; }
```

FILE: grid.js
```js
const letters = "ABCDEFGHIJKLMNOPQRSTU".split("");
const rows = 51;
const active = { col: "J", row: 10 };

let html = "<thead><tr><th></th>";
for (const c of letters) html += `<th scope="col"${c === active.col ? ' class="cur"' : ""}>${c}</th>`;
html += "</tr></thead><tbody>";
for (let r = 1; r <= rows; r++) {
  html += `<tr><th scope="row"${r === active.row ? ' class="cur"' : ""}>${r}</th>`;
  for (const c of letters) {
    html += c === active.col && r === active.row ? '<td class="sel"><span></span></td>' : "<td></td>";
  }
  html += "</tr>";
}
document.getElementById("grid").innerHTML = html + "</tbody>";
```
